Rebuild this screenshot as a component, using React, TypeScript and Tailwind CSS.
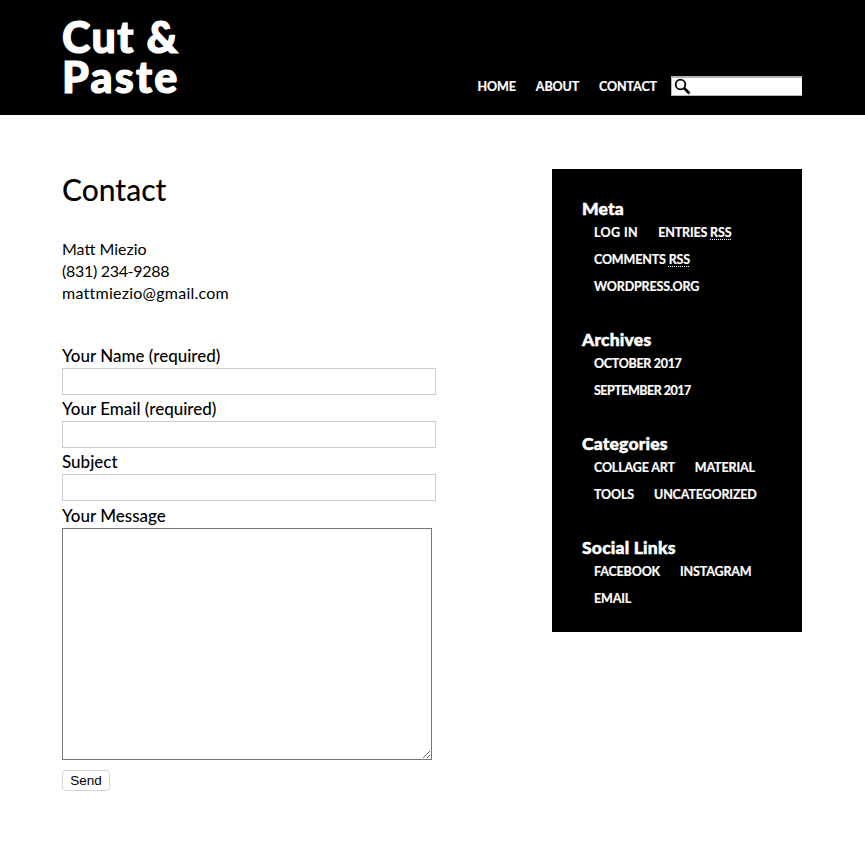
import React from "react";

const Link = ({ children }: { children: React.ReactNode }) => (
  <span className="text-[12.5px] leading-[27px] font-bold uppercase tracking-[-0.15px] text-white [-webkit-text-stroke:0.2px_white]">{children}</span>
);

const Rss = () => (
  <span className="underline decoration-dotted decoration-1 underline-offset-2">RSS</span>
);

const Widget = ({ title, rows }: { title: string; rows: React.ReactNode[][] }) => (
  <section className="mb-[30px] last:mb-0">
    <h2 className="-mt-[1px] text-[17.5px] leading-[22px] font-black tracking-[0.2px] text-white [-webkit-text-stroke:0.5px_white]">{title}</h2>
    <div className="pl-3 -mt-[1px]">
      {rows.map((row, i) => (
        <div key={i} className="flex gap-5 h-[27px]">
          {row.map((item, j) => (
            <Link key={j}>{item}</Link>
          ))}
        </div>
      ))}
    </div>
  </section>
);

const Field = ({ label }: { label: string }) => (
  <div>
    <label className="block h-[26px] pt-[2px] text-[17px] leading-[24px] font-medium text-black">{label}</label>
    <input className="block w-[374px] h-[27px] border border-[#cccccc] bg-white" />
  </div>
);

const navClass = "text-[12.5px] leading-5 font-bold text-white tracking-[-0.1px] [-webkit-text-stroke:0.2px_white]";

export default function App() {
  return (
    <div className="min-h-[865px] bg-white font-['Lato','Liberation_Sans',sans-serif] text-black">
      <header className="h-[115px] bg-black pl-[62px] pr-[63px] flex justify-between items-start">
        <h1 className="pt-[17px] text-[43px] leading-[40px] font-black tracking-[1.4px] text-white [-webkit-text-stroke:1.2px_white]">
          Cut &amp;
          <br />
          <span className="tracking-[2.2px]">Paste</span>
        </h1>
        <div className="flex items-start mt-[76px]">
          <nav className="flex gap-5 mr-[14px] pt-[1px]">
            <span className={navClass}>HOME</span>
            <span className={navClass}>ABOUT</span>
            <span className={navClass}>CONTACT</span>
          </nav>
          <div className="w-[131px] h-5 bg-white border-t-2 border-l border-b border-[#b5b5b5] flex items-center pl-[2px]">
            <svg width="17" height="17" viewBox="0 0 17 17" fill="none" stroke="#000" strokeWidth="1.8">
              <circle cx="6.5" cy="6.5" r="4.8" />
              <path d="M10 10l5.5 5.5" strokeWidth="2.6" />
            </svg>
          </div>
        </div>
      </header>
      <main className="flex justify-between pl-[62px] pr-[63px] pt-[54px]">
        <div className="w-[374px]">
          <h1 className="mt-[1px] text-[30px] leading-[38px] font-medium">Contact</h1>
          <div className="mt-[30px] text-[16px] leading-[22px]">
            <div>Matt Miezio</div>
            <div className="tracking-[-0.3px]">(831) 234-9288</div>
            <div className="tracking-[0.25px]">mattmiezio@gmail.com</div>
          </div>
          <form className="mt-[38px]">
            <Field label="Your Name (required)" />
            <Field label="Your Email (required)" />
            <Field label="Subject" />
            <label className="block h-[27px] pt-[3px] text-[17px] leading-[24px] font-medium">Your Message</label>
            <textarea className="block w-[370px] h-[232px] border border-[#767676] bg-white resize-y" />
            <button
              type="button"
              className="block mt-[10px] w-12 h-[21px] rounded-[4px] border border-[#d4d4d4] bg-white font-['Liberation_Sans',sans-serif] text-[13.5px] leading-[19px] text-center text-black"
            >
              Send
            </button>
          </form>
        </div>
        <aside className="w-[250px] h-[463px] bg-black pl-[30px] pt-[30px]">
          <Widget
            title="Meta"
            rows={[
              [<span className="tracking-[0.4px]">Log in</span>, <>Entries <Rss /></>],
              [<>Comments <Rss /></>],
              ["WordPress.org"],
            ]}
          />
          <Widget
            title="Archives"
            rows={[
              [<span className="tracking-[-0.3px]">October 2017</span>],
              [<span className="tracking-[-0.5px]">September 2017</span>],
            ]}
          />
          <Widget title="Categories" rows={[["Collage Art", "Material"], ["Tools", "Uncategorized"]]} />
          <Widget title="Social Links" rows={[["Facebook", "Instagram"], ["Email"]]} />
        </aside>
      </main>
    </div>
  );
}
